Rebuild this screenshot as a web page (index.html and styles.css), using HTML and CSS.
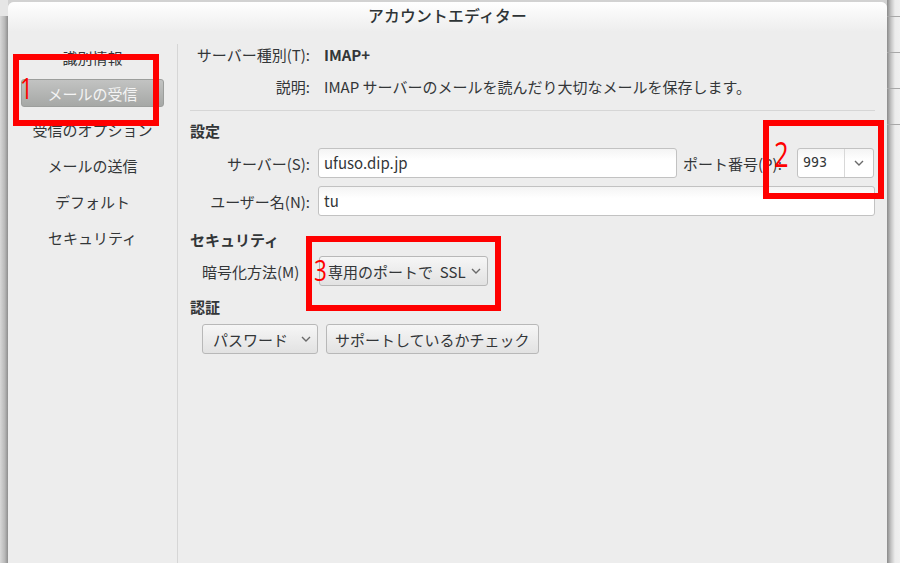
FILE: index.html
```html
<!DOCTYPE html>
<html lang="ja">
<head>
  <meta charset="UTF-8" />
  <title>アカウントエディター</title>
  <link rel="stylesheet" href="styles.css">
</head>
<body>
  <div class="edge-left"></div>

  <div class="dialog">
    <div class="titlebar">アカウントエディター</div>
    <div class="dialog-body">
      <nav class="sidebar">
        <div class="side-item">識別情報</div>
        <div class="side-item"><span class="side-selected">メールの受信</span></div>
        <div class="side-item">受信のオプション</div>
        <div class="side-item">メールの送信</div>
        <div class="side-item">デフォルト</div>
        <div class="side-item">セキュリティ</div>
      </nav>
      <div class="divider"></div>

      <main class="panel">
        <div class="row first">
          <label class="label">サーバー種別(T):</label>
          <span class="value bold">IMAP+</span>
        </div>
        <div class="row">
          <label class="label">説明:</label>
          <span class="value">IMAP サーバーのメールを読んだり大切なメールを保存します。</span>
        </div>
        <hr class="sep" />

        <h3 class="section">設定</h3>
        <div class="row field">
          <label class="label">サーバー(S):</label>
          <div class="entry server">ufuso.dip.jp</div>
          <label class="port-label">ポート番号(P):</label>
          <div class="spin">
            <span class="spin-text">993</span>
            <span class="spin-btn">
              <svg width="10" height="6" viewBox="0 0 10 6"><polyline points="1,1 5,5 9,1" fill="none" stroke="#6a6a6a" stroke-width="1.4"/></svg>
            </span>
          </div>
        </div>
        <div class="row field">
          <label class="label">ユーザー名(N):</label>
          <div class="entry grow">tu</div>
        </div>

        <h3 class="section sec2">セキュリティ</h3>
        <div class="row field">
          <label class="label left">暗号化方法(M)</label>
          <div class="combo ssl">専用のポートで&nbsp;&nbsp;SSL
            <svg width="10" height="6" viewBox="0 0 10 6"><polyline points="1,1 5,5 9,1" fill="none" stroke="#6a6a6a" stroke-width="1.4"/></svg>
          </div>
        </div>

        <h3 class="section sec3">認証</h3>
        <div class="auth-row">
          <div class="combo pass">パスワード
            <svg width="10" height="6" viewBox="0 0 10 6"><polyline points="1,1 5,5 9,1" fill="none" stroke="#6a6a6a" stroke-width="1.4"/></svg>
          </div>
          <div class="button">サポートしているかチェック</div>
        </div>
      </main>
    </div>
  </div>

  <div class="edge-right">
    <div class="bg-line"></div>
    <div class="bg-line"></div>
    <div class="bg-line"></div>
    <div class="bg-line"></div>
  </div>

  <!-- annotations drawn over the screenshot -->
  <div class="mark mark1"></div>
  <div class="mark mark2"></div>
  <div class="mark mark3"></div>
  <span class="num num1">1</span>
  <span class="num num2">2</span>
  <span class="num num3">3</span>
</body>
</html>
```

FILE: styles.css
```css
body {
  margin: 0;
  width: 900px;
  height: 563px;
  overflow: hidden;
  display: flex;
  font-family: "Noto Sans CJK JP", "Noto Sans", sans-serif;
  font-size: 15px;
  color: #333638;
  background-color: #d2d2d2;
}

.edge-left {
  width: 8px;
  flex-shrink: 0;
  background: linear-gradient(to right, #d8d8d8, #b8b8b8 60%, #8e8e8e);
  border-top: 16px solid #e6e6e6;
  box-sizing: border-box;
}

.edge-right {
  width: 13px;
  flex-shrink: 0;
  background: linear-gradient(to right, #8a8a8a, #c4c4c4 4px, #ececec 8px, #f0f0f0);
  padding-top: 16px;
}

.bg-line {
  height: 35px;
  border-top: 1px solid #a8a8a8;
}

.dialog {
  width: 879px;
  flex-shrink: 0;
  margin-top: 2px;
  background-color: #ededed;
  border-radius: 6px 6px 0 0;
  display: flex;
  flex-direction: column;
}

.titlebar {
  height: 30px;
  line-height: 28px;
  text-align: center;
  font-size: 15.8px;
  font-weight: 500;
  letter-spacing: 0.2px;
  color: #2e3436;
  border-radius: 6px 6px 0 0;
  background: linear-gradient(to bottom, #ffffff, #ededed);
}

.dialog-body {
  flex: 1;
  display: flex;
}

.sidebar {
  width: 169px;
  padding-top: 7px;
}

.side-item {
  height: 36px;
  display: flex;
  align-items: center;
  justify-content: center;
  white-space: nowrap;
}

.side-selected {
  width: 143px;
  height: 28px;
  box-sizing: border-box;
  display: flex;
  align-items: center;
  justify-content: center;
  color: #f4f4f4;
  border: 1px solid #9c9e9c;
  border-radius: 3px;
  background: linear-gradient(to bottom, #c2c3c2, #a6a8a6);
}

.divider {
  width: 1px;
  margin-top: 12px;
  background-color: #d6d6d6;
}

.panel {
  flex: 1;
  padding: 8px 12px 0 12px;
}

.row {
  display: flex;
  align-items: center;
  height: 28px;
  margin-bottom: 4px;
}

.row.field {
  height: 30px;
  margin-bottom: 8px;
}

.label {
  width: 120px;
  flex-shrink: 0;
  text-align: right;
  white-space: nowrap;
  margin-right: 8px;
}

.label.left {
  text-align: left;
  padding-left: 12px;
  box-sizing: border-box;
}

.value {
  padding-left: 6px;
  white-space: nowrap;
}

.bold {
  font-weight: bold;
}

.sep {
  border: none;
  border-top: 1px solid #d6d6d6;
  margin: 10px 0 10px 0;
}

.section {
  margin: 0 0 7px 0;
  font-size: 15px;
  font-weight: bold;
  height: 20px;
  line-height: 20px;
}

.sec2 {
  margin-top: 14px;
  margin-bottom: 6px;
}

.sec3 {
  margin-top: 11px;
  margin-bottom: 7px;
}

.entry {
  height: 30px;
  box-sizing: border-box;
  border: 1px solid #c2c2c2;
  border-radius: 3px;
  background: linear-gradient(to bottom, #f4f4f4, #ffffff 40%);
  padding-left: 5px;
  line-height: 27px;
}

.server {
  width: 359px;
}

.grow {
  flex: 1;
}

.port-label {
  margin-left: 6px;
  width: 114px;
  white-space: nowrap;
}

.spin {
  width: 77px;
  height: 30px;
  box-sizing: border-box;
  display: flex;
  border: 1px solid #c2c2c2;
  border-radius: 3px;
  background: linear-gradient(to bottom, #f4f4f4, #ffffff 40%);
}

.spin-text {
  flex: 1;
  padding-left: 5px;
  line-height: 27px;
  font-family: "DejaVu Sans Condensed", "Liberation Sans Narrow", sans-serif;
  font-size: 14px;
}

.spin-btn {
  width: 28px;
  border-left: 1px solid #d8d8d8;
  display: flex;
  align-items: center;
  justify-content: center;
}

.combo,
.button {
  height: 30px;
  box-sizing: border-box;
  display: flex;
  align-items: center;
  white-space: nowrap;
  border: 1px solid #b8b8b8;
  border-radius: 3px;
  background: linear-gradient(to bottom, #f6f6f6, #e2e2e2);
}

.combo svg {
  margin-left: auto;
}

.ssl {
  width: 169px;
  margin-left: 1px;
  padding: 0 6px 0 8px;
}

.auth-row {
  display: flex;
  gap: 8px;
  padding-left: 12px;
}

.pass {
  width: 116px;
  padding: 0 6px 0 10px;
}

.button {
  padding: 0 8px;
}

.mark {
  position: absolute;
  border: 6px solid #ff0000;
  box-sizing: border-box;
}

.mark1 { left: 13px; top: 54px; width: 146px; height: 72px; }
.mark2 { left: 763px; top: 120px; width: 121px; height: 79px; }
.mark3 { left: 306px; top: 236px; width: 195px; height: 75px; }

.num {
  position: absolute;
  color: #ff0000;
  font-family: "Open Sans", "Liberation Sans", sans-serif;
  font-weight: 400;
  font-size: 30px;
  line-height: 1;
  transform: scaleX(0.75);
  transform-origin: left top;
}

.num1 { left: 20px; top: 73px; }
.num2 { left: 774px; top: 137px; font-size: 34px; }
.num3 { left: 314px; top: 255px; }
```
